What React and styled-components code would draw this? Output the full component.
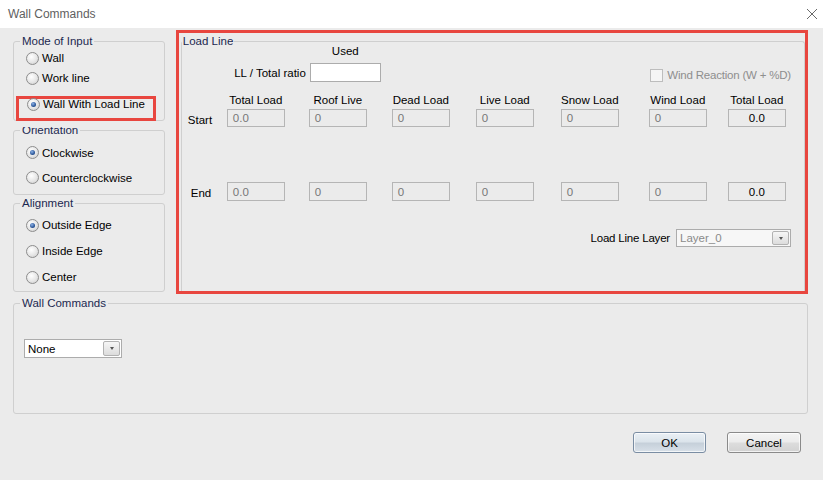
import styled, { createGlobalStyle } from "styled-components";

const GlobalStyle = createGlobalStyle`
  html, body {
    margin: 0;
    padding: 0;
    background: #ebebeb;
  }
  body {
    font-family: "Liberation Sans", Arial, sans-serif;
    font-size: 11.5px;
    color: #000;
  }
`;

const Window = styled.div`
  width: 823px;
  height: 480px;
  background: #ebebeb;
  display: flex;
  flex-direction: column;
  overflow: hidden;
`;

const TitleBar = styled.div`
  height: 28px;
  background: #fff;
  display: flex;
  align-items: center;
  justify-content: space-between;
  padding: 0 5px 0 8px;
  box-sizing: border-box;
  font-size: 12px;
  color: #5f5f5f;
`;

const Body = styled.div`
  padding: 2px 15px 0 13px;
  display: flex;
  flex-direction: column;
`;

const TopArea = styled.div`
  display: flex;
  gap: 11px;
  align-items: flex-start;
  height: 264px;
`;

const LeftCol = styled.div`
  width: 152px;
  margin-top: 4px;
  display: flex;
  flex-direction: column;
`;

const Group = styled.fieldset`
  margin: ${(p) => p.$mt || 0}px 0 0 0;
  padding: 0;
  border: 1px solid #cfcfcf;
  border-radius: 3px;
  height: ${(p) => p.$h}px;
  box-sizing: border-box;
  min-width: 0;
`;

const Legend = styled.legend`
  margin-left: 6px;
  padding: 0 2px;
  line-height: 14px;
  color: #1b2850;
  clip-path: ${(p) => (p.$clipped ? "inset(4px 0 0 0)" : "none")};
`;

const RadioList = styled.div`
  padding: ${(p) => p.$pt || 0}px 0 0 12px;
  display: flex;
  flex-direction: column;
`;

const RadioRow = styled.div`
  height: ${(p) => p.$h || 20}px;
  display: flex;
  align-items: center;
  gap: 3px;
`;

const RadioDot = styled.span`
  width: 13px;
  height: 13px;
  box-sizing: border-box;
  border-radius: 50%;
  border: 1px solid #8d8d8d;
  background: radial-gradient(circle at 40% 35%, #ffffff 0%, #e6e6e6 55%, #c9c9c9 100%);
  display: flex;
  align-items: center;
  justify-content: center;
  flex-shrink: 0;

  &::after {
    content: "";
    width: 5px;
    height: 5px;
    border-radius: 50%;
    background: radial-gradient(circle at 40% 35%, #8db2e6 0%, #2c5799 60%, #1a3a70 100%);
    display: ${(p) => (p.$checked ? "block" : "none")};
  }
`;

const Highlight = styled.div`
  width: 140px;
  height: 25px;
  margin: 8px 0 -1px -10px;
  box-sizing: border-box;
  border: 3px solid #e8463f;
  padding-left: 8px;
  display: flex;
  align-items: flex-start;
  position: relative;

  & > div {
    margin-top: -2px;
    height: 14px;
  }
`;

const RedBox = styled.div`
  width: 633px;
  height: 264px;
  box-sizing: border-box;
  border: 3px solid #e8463f;
  padding: 1px 0 0 2px;
  display: flex;
`;

const LoadGroup = styled.fieldset`
  flex: 1;
  margin: 0;
  padding: 0;
  border: 1px solid #cfcfcf;
  border-bottom: none;
  border-radius: 3px 3px 0 0;
  min-width: 0;
  display: flex;
  flex-direction: column;
`;

const LoadLegend = styled.legend`
  margin-left: 0;
  padding: 0 1px;
  line-height: 14px;
  color: #1b2850;
`;

const RatioGrid = styled.div`
  margin-top: -4px;
  display: grid;
  grid-template-columns: 128px 71px 1fr;
  grid-template-rows: 14px 19px;
  row-gap: 5px;
`;

const UsedLabel = styled.div`
  grid-column: 2;
  text-align: center;
  line-height: 14px;
`;

const RatioLabel = styled.div`
  grid-column: 1;
  text-align: right;
  padding-right: 4px;
  align-self: center;
`;

const RatioInput = styled.div`
  grid-column: 2;
  background: #fff;
  border: 1px solid #acacac;
  box-sizing: border-box;
`;

const WindCheck = styled.div`
  grid-column: 3;
  justify-self: end;
  align-self: end;
  padding-right: 13px;
  display: flex;
  align-items: center;
  gap: 4px;
  color: #8e8e8e;
  line-height: 14px;
  letter-spacing: -0.2px;
`;

const CheckBox = styled.span`
  width: 13px;
  height: 13px;
  box-sizing: border-box;
  border: 1px solid #bdbdbd;
  background: #f5f5f5;
`;

const LoadRow = styled.div`
  margin-top: ${(p) => p.$mt}px;
  display: grid;
  grid-template-columns: 45px 82px 83px 84px 85px 88px 79px 58px;
  align-items: center;
`;

const ColHeader = styled.div`
  width: 58px;
  white-space: nowrap;
  line-height: 14px;
  display: flex;
  justify-content: center;
`;

const RowLabel = styled.div`
  padding-left: ${(p) => p.$pl}px;
  padding-top: ${(p) => p.$pt}px;
`;

const TextBox = styled.div`
  width: 58px;
  height: ${(p) => p.$h}px;
  box-sizing: border-box;
  border: 1px solid #b5b5b5;
  background: #ebebeb;
  padding: 0 5px;
  display: flex;
  align-items: center;
  justify-content: ${(p) => (p.$dark ? "center" : "flex-start")};
  color: ${(p) => (p.$dark ? "#000" : "#777")};
`;

const LayerRow = styled.div`
  margin-top: 28px;
  display: flex;
  justify-content: flex-end;
  align-items: center;
  gap: 6px;
  padding-right: 13px;
  letter-spacing: -0.2px;
`;

const Combo = styled.div`
  width: ${(p) => p.$w}px;
  height: ${(p) => p.$h}px;
  box-sizing: border-box;
  border: 1px solid #acacac;
  background: ${(p) => (p.$disabled ? "#f7f7f7" : "#fff")};
  color: ${(p) => (p.$disabled ? "#8a8a8a" : "#000")};
  display: flex;
  align-items: center;
  justify-content: space-between;
  padding: 0 1px 0 3px;
  margin: ${(p) => p.$m || 0};
  letter-spacing: 0;
`;

const DropButton = styled.span`
  width: 17px;
  height: ${(p) => p.$h || 14}px;
  box-sizing: border-box;
  border: 1px solid #b2b2b2;
  border-radius: 2px;
  background: linear-gradient(#f6f6f6, #dcdcdc);
  display: flex;
  align-items: center;
  justify-content: center;

  &::after {
    content: "";
    border-left: 2.5px solid transparent;
    border-right: 2.5px solid transparent;
    border-top: 3px solid #555;
  }
`;

const Footer = styled.div`
  margin-top: 18px;
  display: flex;
  justify-content: flex-end;
  gap: 21px;
  padding-right: 7px;
`;

const Button = styled.button`
  width: ${(p) => p.$w}px;
  height: 21px;
  box-sizing: border-box;
  border: 1px solid ${(p) => (p.$default ? "#7a8da3" : "#8a8a8a")};
  border-radius: 3px;
  background: ${(p) =>
    p.$default
      ? "linear-gradient(#eaf0f5 0%, #dce4eb 45%, #c6d0da 55%, #d8e0e8 100%)"
      : "linear-gradient(#f4f4f4 0%, #ececec 45%, #dcdcdc 55%, #d2d2d2 100%)"};
  box-shadow: inset 0 0 0 1px rgba(255, 255, 255, 0.7);
  font-family: inherit;
  font-size: 11.5px;
  color: #000;
  padding: 0;
`;

const CloseIcon = () => (
  <svg width="12" height="12" viewBox="0 0 12 12">
    <path d="M1 1 L11 11 M11 1 L1 11" stroke="#6a6a6a" strokeWidth="1" />
  </svg>
);

const Radio = ({ label, checked, h }) => (
  <RadioRow $h={h}>
    <RadioDot $checked={checked} />
    <span>{label}</span>
  </RadioRow>
);

const headers = [
  "Total Load",
  "Roof Live",
  "Dead Load",
  "Live Load",
  "Snow Load",
  "Wind Load",
  "Total Load",
];
const values = ["0.0", "0", "0", "0", "0", "0", "0.0"];

const App = () => {
  return (
    <Window>
      <GlobalStyle />
      <TitleBar>
        <span>Wall Commands</span>
        <CloseIcon />
      </TitleBar>
      <Body>
        <TopArea>
          <LeftCol>
            <Group $h={87}>
              <Legend>Mode of Input</Legend>
              <RadioList>
                <Radio label="Wall" />
                <Radio label="Work line" />
                <Highlight>
                  <Radio label="Wall With Load Line" checked />
                </Highlight>
              </RadioList>
            </Group>
            <Group $h={72} $mt={2}>
              <Legend $clipped>Orientation</Legend>
              <RadioList $pt={3}>
                <Radio label="Clockwise" checked h={25} />
                <Radio label="Counterclockwise" h={25} />
              </RadioList>
            </Group>
            <Group $h={96} $mt={1}>
              <Legend>Alignment</Legend>
              <RadioList $pt={2}>
                <Radio label="Outside Edge" checked h={26} />
                <Radio label="Inside Edge" h={26} />
                <Radio label="Center" h={26} />
              </RadioList>
            </Group>
          </LeftCol>

          <RedBox>
            <LoadGroup>
              <LoadLegend>Load Line</LoadLegend>
              <RatioGrid>
                <UsedLabel>Used</UsedLabel>
                <RatioLabel>LL / Total ratio</RatioLabel>
                <RatioInput />
                <WindCheck>
                  <CheckBox />
                  <span>Wind Reaction (W + %D)</span>
                </WindCheck>
              </RatioGrid>

              <LoadRow $mt={11}>
                <span />
                {headers.map((h, i) => (
                  <ColHeader key={i}>{h}</ColHeader>
                ))}
              </LoadRow>
              <LoadRow $mt={2}>
                <RowLabel $pl={6} $pt={3}>Start</RowLabel>
                {values.map((v, i) => (
                  <TextBox key={i} $h={18} $dark={i === 6}>
                    {v}
                  </TextBox>
                ))}
              </LoadRow>
              <LoadRow $mt={55}>
                <RowLabel $pl={9} $pt={3}>End</RowLabel>
                {values.map((v, i) => (
                  <TextBox key={i} $h={19} $dark={i === 6}>
                    {v}
                  </TextBox>
                ))}
              </LoadRow>

              <LayerRow>
                <span>Load Line Layer</span>
                <Combo $w={115} $h={18} $disabled>
                  <span>Layer_0</span>
                  <DropButton />
                </Combo>
              </LayerRow>
            </LoadGroup>
          </RedBox>
        </TopArea>

        <Group $h={118} $mt={2}>
          <Legend>Wall Commands</Legend>
          <Combo $w={98} $h={19} $m="29px 0 0 10px">
            <span>None</span>
            <DropButton $h={15} />
          </Combo>
        </Group>

        <Footer>
          <Button $w={73} $default>
            OK
          </Button>
          <Button $w={74}>Cancel</Button>
        </Footer>
      </Body>
    </Window>
  );
};

export default App;
